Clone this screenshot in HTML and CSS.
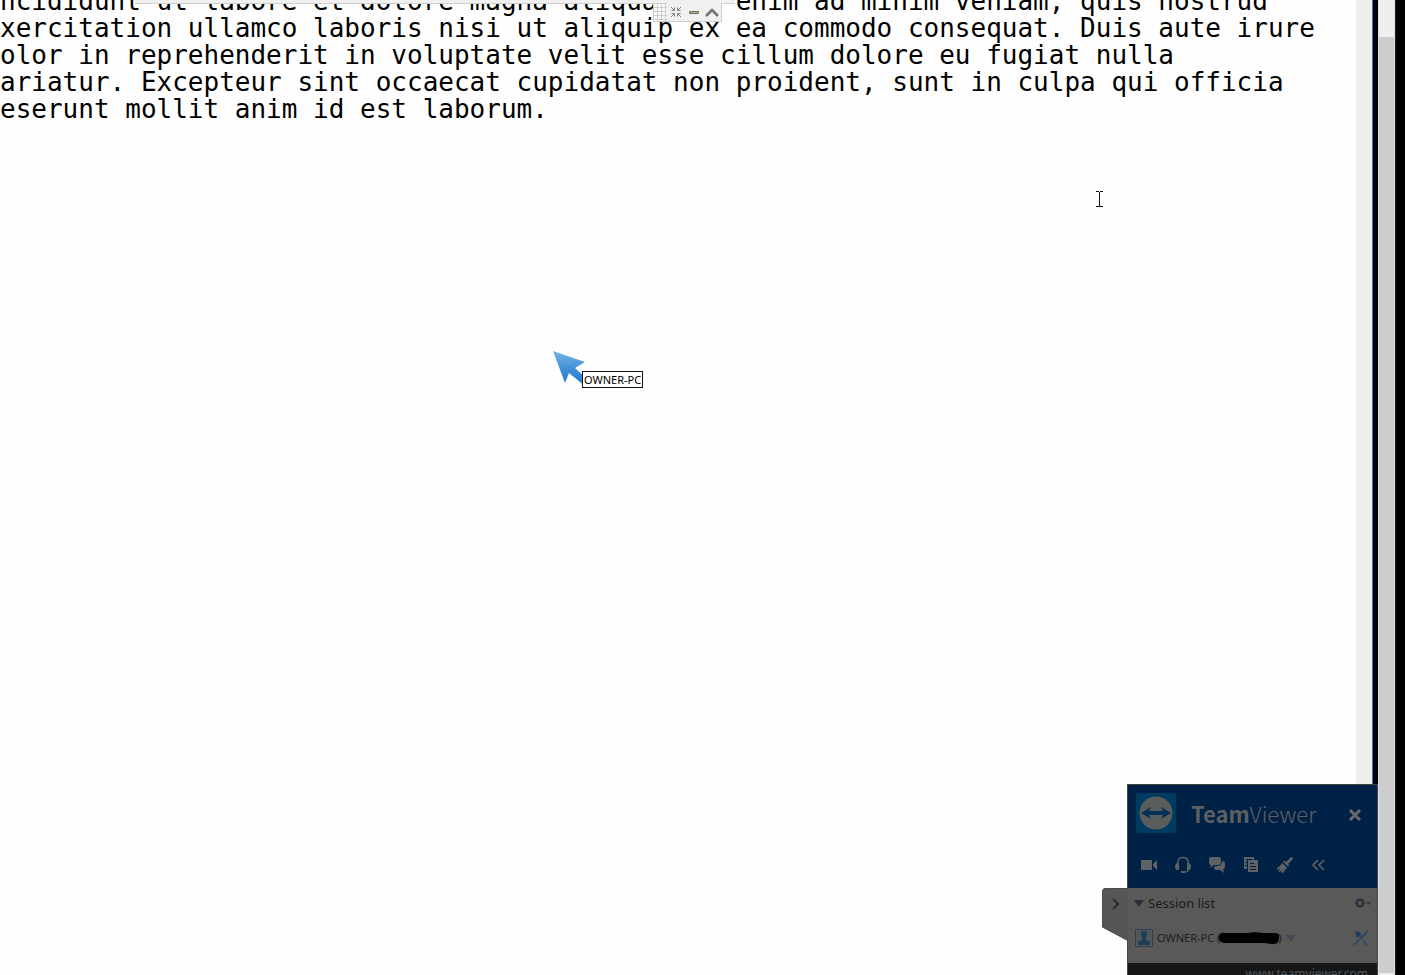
FILE: index.html
```html
<!DOCTYPE html>
<html lang="en">
<head>
<meta charset="utf-8">
<title>Remote session</title>
<link rel="stylesheet" href="styles.css">
</head>
<body>
<div class="desktop">
  <main class="document">
    <p class="document-text">ncididunt ut labore et dolore magna aliqua. Ut enim ad minim veniam, quis nostrud
xercitation ullamco laboris nisi ut aliquip ex ea commodo consequat. Duis aute irure
olor in reprehenderit in voluptate velit esse cillum dolore eu fugiat nulla
ariatur. Excepteur sint occaecat cupidatat non proident, sunt in culpa qui officia
eserunt mollit anim id est laborum.</p>
  </main>
  <div class="document-scroll"></div>
  <div class="window-edge"></div>
  <div class="outer-scroll"><div class="outer-thumb"></div></div>
  <div class="screen-edge"></div>

  <div class="session-bar">
    <div class="session-tools">
      <span class="grip"></span>
      <button class="tool" aria-label="Exit full screen"><svg width="12" height="12" viewBox="0 0 12 12" fill="none" stroke="#88837a"><path d="M1 1l3 3M4.500 1.500v3h-3M11 1L8 4M7.500 1.500v3h3M1 11l3-3M1.500 7.500h3v3M11 11L8 8M10.500 7.500h-3v3"/></svg></button>
      <button class="tool" aria-label="Minimize"><svg width="12" height="12" viewBox="0 0 12 12"><path fill="#c5ad82" stroke="#706e6c" d="M1.500 5.500h9v2h-9z"/></svg></button>
      <button class="tool" aria-label="Collapse toolbar"><svg width="16" height="12" viewBox="0 0 16 12" fill="none" stroke="#747270" stroke-width="2.500"><path d="M2 10l6-6 6 6"/></svg></button>
    </div>
  </div>

  <svg class="text-cursor" width="9" height="17" viewBox="0 0 9 17" fill="none" stroke="#111"><path d="M1 .5h3M5 .5h3M4.500 1v15M1 15.500h3M5 15.500h3"/></svg>

  <div class="remote-pointer">
    <svg class="arrow" width="32" height="35" viewBox="0 0 32 35"><defs><linearGradient id="blue" x2="0" y2="1"><stop stop-color="#78b3e6"/><stop offset=".5" stop-color="#4390da"/><stop offset="1" stop-color="#1f76ca"/></linearGradient></defs><path fill="url(#blue)" d="M0 0l32 11-10 6 10 9v9l-16-13-4 10z"/></svg>
    <span class="pointer-name">OWNER-PC</span>
  </div>

  <aside class="panel">
    <button class="panel-tab" aria-label="Hide panel">
      <svg width="26" height="53" viewBox="0 0 26 53"><path fill="#565654" d="M26 0H4Q0 0 0 4v35l26 14z"/><path fill="none" stroke="#4a4d50" d="M26 .5H4Q.5 .5 .5 4v35L26 52.500"/><path fill="none" stroke="#252e3a" stroke-width="2" d="M11 11l5 5-5 5"/></svg>
    </button>
    <header class="panel-header">
      <div class="brand-row">
        <svg class="logo" width="40" height="40" viewBox="0 0 40 40"><rect width="40" height="40" rx="2" fill="#003c62"/><circle cx="20" cy="20" r="16.500" fill="#5b5c5c"/><path fill="#003156" d="M5 20l10-6-2 4h14l-2-4 10 6-10 6 2-4H13l2 4z"/></svg>
        <h1 class="brand"><b>Team</b>Viewer</h1>
        <button class="close" aria-label="Close"><svg width="14" height="14" viewBox="0 0 14 14" stroke="#696a6b" stroke-width="3"><path d="M2 2l10 10M12 2L2 12"/></svg></button>
      </div>
      <nav class="actions">
        <button aria-label="Video"><svg width="18" height="18" viewBox="0 0 18 18" fill="#5e6266"><path d="M1 4h11v10H1zM13 8l4-4v10l-4-4z"/></svg></button>
        <button aria-label="Audio"><svg width="18" height="18" viewBox="0 0 18 18" fill="none" stroke="#5e6266" stroke-width="1.300"><path d="M3.500 8q0-6.500 5.500-6.500T14.500 8M15 13q-1 3-5 3"/><path fill="#5e6266" stroke="none" d="M3 7h2v7H3Q1 13 1 10.500T3 7zM15 7h-2v7h2q2-1 2-3.500T15 7zM7 15h4v2H7z"/></svg></button>
        <button aria-label="Chat"><svg width="18" height="18" viewBox="0 0 18 18" fill="#5e6266"><path d="M3 1h8q2 0 2 2v3q0 3-3 3H6l-4 3 1-3Q1 9 1 7V3q0-2 2-2zM9 10q5 0 5-5 3 0 3 3v3q0 2-2 2l1 4-4-3H8q-2 0-2-2l1-2z"/></svg></button>
        <button aria-label="Files"><svg width="18" height="18" viewBox="0 0 18 18"><path fill="#5e6266" d="M2 1h10v3H6v9H2zM6 4h10v12H6z"/><path stroke="#002146" d="M4 3.500h7M3 6.500h2M3 9.500h2M5.500 4v9M8 7.500h4M8 10.500h6M8 13.500h6"/></svg></button>
        <button aria-label="Whiteboard"><svg width="18" height="18" viewBox="0 0 18 18" fill="#5e6266"><path d="M15 1q3 0 1.500 2.500L12 8l1.500 1.500-1.500 1L7 6l1-1.500 2 1.500zM6 7l5 4.500L7 17l-2-1 1-2-2.500 2-1-1L4 13l-3 .5V12q3-1 5-5z"/></svg></button>
        <button aria-label="Collapse"><svg width="18" height="18" viewBox="0 0 18 18" fill="none" stroke="#5e6266" stroke-width="1.600"><path d="M8 4L3 9l5 5M14 4L9 9l5 5"/></svg></button>
      </nav>
    </header>
    <section class="sessions">
      <div class="row row-title">
        <svg width="10" height="8" viewBox="0 0 10 8"><path fill="#272f39" d="M0 1h10L5 8z"/></svg>
        <h2 class="title">Session list</h2>
        <button class="row-end" aria-label="Session settings"><svg width="17" height="12" viewBox="0 0 17 12"><circle cx="6" cy="6" r="3" fill="none" stroke="#2b3540" stroke-width="2"/><path stroke="#2b3540" stroke-width="2" d="M6 1v2M6 9v2M1 6h2M9 6h2M2.500 2.500L4 4M8 8l1.500 1.500M9.500 2.500L8 4M4 8L2.500 9.500"/><path fill="#2b3540" d="M12 5h5l-2.500 3z"/></svg></button>
      </div>
      <div class="row row-user">
        <svg width="18" height="18" viewBox="0 0 18 18"><path fill="#52595e" stroke="#2b4056" d="M.5 .5h17v17H.5z"/><path fill="#233d52" d="M6 3q3-2 6 0 1 3-1 6v2l4 2v3H3v-3l4-2V9Q5 6 6 3z"/></svg>
        <span class="user">OWNER-PC (<svg class="redaction" width="62" height="14" viewBox="0 0 62 14"><path d="M2 3q2-2 5-1h22l8-1 8 1h13q4 1 3 5 0 7-7 6l-8-1H6Q0 11 1 6z"/></svg>)</span>
        <svg width="10" height="7" viewBox="0 0 10 7"><path fill="#424952" d="M0 0h10L5 7z"/></svg>
        <button class="row-end" aria-label="End remote control"><svg width="16" height="16" viewBox="0 0 16 16"><path fill="#183b5d" d="M2 1l6 2-1 2 3 3-1 1-3-3-2 2z"/><path fill="none" stroke="#2d4864" stroke-width="2" d="M1 15L15 1"/><path stroke="#244363" stroke-width="1.500" d="M10 11l4 4"/></svg></button>
      </div>
    </section>
    <footer class="panel-footer"><a href="#">www.teamviewer.com</a></footer>
  </aside>
</div>
</body>
</html>
```
FILE: styles.css
```css
* { box-sizing: border-box; }
body { margin: 0; background: #000; }
button { display: flex; align-items: center; justify-content: center; padding: 0; border: 0; background: none; }
svg { display: block; flex: none; }

.desktop {
  position: relative;
  display: grid;
  grid-template-columns: 1fr 16px 6px 17px 10px;
  height: 100vh;
  overflow: hidden;
}
.document { min-width: 0; overflow: hidden; background: #fefefe; }
.document-text {
  margin: -12px 0 0;
  color: #000;
  font: 26px/27px "DejaVu Sans Mono", monospace;
  white-space: pre;
}
.document-scroll { background: #efefef; }
.window-edge { border-left: 1px solid #2f7fd0; background: #000; }
.outer-scroll {
  padding: 37px 0 2px;
  background: #efefef;
  border-left: 1px solid #ddd;
  border-right: 1px solid #ddd;
}
.outer-thumb { height: 100%; background: #cdcdcd; }
.screen-edge { border-left: 1px solid #222; background: #000; }

.session-bar {
  position: absolute;
  top: 0;
  left: 135px;
  width: 600px;
  height: 4px;
  padding: 3px 0 0 518px;
  background: #f0f0f0;
  border-bottom: 1px solid #d0d0d0;
}
.session-tools {
  display: flex;
  width: 69px;
  height: 19px;
  background: #f0f0f0;
  border: solid #cfcfcf;
  border-width: 0 1px 1px 0;
}
.grip {
  width: 14px;
  background: repeating-linear-gradient(90deg, #ccc 0 1px, transparent 1px 4px), repeating-linear-gradient(#ccc 0 1px, #fafafa 1px 4px);
}
.tool { width: 18px; }

.text-cursor { position: absolute; left: 1095px; top: 191px; }
.remote-pointer { position: absolute; left: 553px; top: 351px; }
.pointer-name {
  position: absolute;
  left: 29px;
  top: 20px;
  padding: 0 1px;
  border: 1px solid #111;
  background: #fff;
  color: #000;
  font: 11px/15px "Noto Sans", sans-serif;
  white-space: nowrap;
}

.panel {
  position: absolute;
  right: 27px;
  bottom: 0;
  width: 251px;
  border: solid #444;
  border-width: 1px 1px 0;
  font-family: "Noto Sans", sans-serif;
}
.panel-tab { position: absolute; left: -26px; top: 103px; }
.panel-header { height: 103px; padding: 8px 14px 0 8px; background: #002146; }
.brand-row { display: flex; align-items: center; }
.brand { margin: 0 0 0 15px; color: #5d6063; font-family: "Noto Sans CJK SC", sans-serif; font-size: 22px; line-height: 40px; font-weight: 300; }
.brand b { font-weight: 700; }
.close { width: 16px; height: 40px; margin-left: auto; padding-top: 4px; }
.actions { display: flex; gap: 16px; padding: 23px 0 0 4px; }
.sessions { height: 75px; background: #595957; }
.row { display: flex; align-items: center; padding: 0 6px; }
.row-title { height: 30px; gap: 4px; }
.title { margin: 0; color: #191c20; font-size: 13px; line-height: 20px; font-weight: 400; }
.row-end { margin-left: auto; }
.row-user { height: 40px; gap: 4px; padding: 0 8px 0 7px; }
.user { display: flex; align-items: center; color: #1c1d1f; font-size: 11px; line-height: 16px; white-space: pre; }
.redaction { margin: 0 -2px; }
.panel-footer { height: 12px; padding: 2px 9px 0; overflow: hidden; background: #161616; text-align: right; }
.panel-footer a { display: block; color: #4e565e; font-size: 12px; line-height: 18px; text-decoration: none; }
```
